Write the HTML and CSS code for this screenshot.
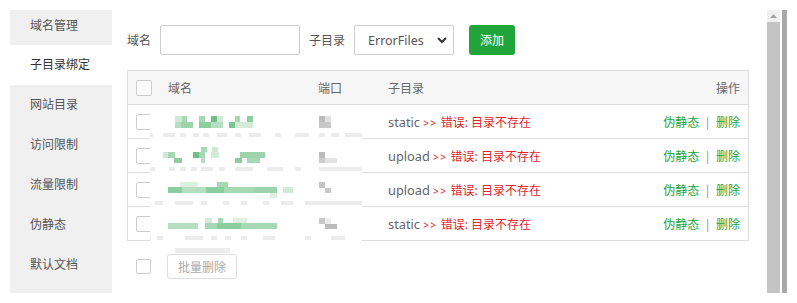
FILE: index.html
```html
<!DOCTYPE html>
<html lang="zh-CN">
  <head>
    <meta charset="UTF-8" />
    <meta name="viewport" content="width=device-width, initial-scale=1.0" />
    <title>子目录绑定</title>
    <link rel="stylesheet" href="styles.css">
  </head>
  <body>
    <div class="wrap">
      <ul class="side">
        <li class="first">域名管理</li>
        <li class="on">子目录绑定</li>
        <li>网站目录</li>
        <li>访问限制</li>
        <li>流量限制</li>
        <li>伪静态</li>
        <li>默认文档</li>
      </ul>

      <div class="main">
        <div class="form">
          <span class="lbl">域名</span>
          <input class="ipt" type="text" />
          <span class="lbl">子目录</span>
          <div class="sel">
            <span>ErrorFiles</span>
            <svg width="10" height="7" viewBox="0 0 10 7"><polyline points="1,1 5,5 9,1" fill="none" stroke="#333" stroke-width="2"/></svg>
          </div>
          <button class="btn">添加</button>
        </div>

        <div class="tbox">
          <table class="tbl">
            <thead>
              <tr>
                <th class="c_chk"><span class="chk"></span></th>
                <th class="c_dom">域名</th>
                <th class="c_port">端口</th>
                <th>子目录</th>
                <th class="c_op">操作</th>
              </tr>
            </thead>
            <tbody>
              <tr>
                <td class="c_chk"><span class="chk"></span></td>
                <td></td>
                <td></td>
                <td><span class="dir">static</span> <span class="err"><span class="arr">&gt;&gt;</span> 错误: 目录不存在</span></td>
                <td class="c_op"><a>伪静态</a><span class="sep">|</span><a>删除</a></td>
              </tr>
              <tr>
                <td class="c_chk"><span class="chk"></span></td>
                <td></td>
                <td></td>
                <td><span class="dir">upload</span> <span class="err"><span class="arr">&gt;&gt;</span> 错误: 目录不存在</span></td>
                <td class="c_op"><a>伪静态</a><span class="sep">|</span><a>删除</a></td>
              </tr>
              <tr>
                <td class="c_chk"><span class="chk"></span></td>
                <td></td>
                <td></td>
                <td><span class="dir">upload</span> <span class="err"><span class="arr">&gt;&gt;</span> 错误: 目录不存在</span></td>
                <td class="c_op"><a>伪静态</a><span class="sep">|</span><a>删除</a></td>
              </tr>
              <tr>
                <td class="c_chk"><span class="chk"></span></td>
                <td></td>
                <td></td>
                <td><span class="dir">static</span> <span class="err"><span class="arr">&gt;&gt;</span> 错误: 目录不存在</span></td>
                <td class="c_op"><a>伪静态</a><span class="sep">|</span><a>删除</a></td>
              </tr>
            </tbody>
          </table>

          <!-- pixelated domain / port cells -->
          <svg class="mosaic" width="212" height="148" viewBox="5 0 212 148">
            <rect x="5" y="0" width="212" height="148" fill="#fff"/>
            <g fill="#ececec">
              <rect x="0" y="28" width="8" height="4"/><rect x="18" y="28" width="12" height="4"/><rect x="35" y="28" width="6" height="4"/><rect x="48" y="28" width="6" height="4"/><rect x="58" y="28" width="6" height="4"/><rect x="72" y="28" width="10" height="4"/><rect x="90" y="28" width="6" height="4"/><rect x="104" y="28" width="12" height="4"/><rect x="130" y="28" width="6" height="4"/><rect x="150" y="28" width="14" height="4"/><rect x="174" y="28" width="6" height="4"/><rect x="186" y="28" width="8" height="4"/><rect x="200" y="28" width="17" height="4"/>
              <rect x="0" y="62" width="10" height="4"/><rect x="24" y="62" width="6" height="4"/><rect x="35" y="62" width="6" height="4"/><rect x="46" y="62" width="6" height="4"/><rect x="56" y="62" width="12" height="4"/><rect x="74" y="62" width="6" height="4"/><rect x="90" y="62" width="18" height="4"/><rect x="122" y="62" width="16" height="4"/><rect x="150" y="62" width="6" height="4"/><rect x="174" y="62" width="43" height="4"/>
              <rect x="10" y="96" width="8" height="4"/><rect x="30" y="96" width="18" height="4"/><rect x="56" y="96" width="6" height="4"/><rect x="78" y="96" width="6" height="4"/><rect x="96" y="96" width="6" height="4"/><rect x="118" y="96" width="6" height="4"/><rect x="136" y="96" width="12" height="4"/><rect x="160" y="96" width="57" height="4"/>
              <rect x="0" y="131" width="6" height="4"/><rect x="12" y="131" width="6" height="4"/><rect x="40" y="131" width="18" height="4"/><rect x="66" y="131" width="6" height="4"/><rect x="80" y="131" width="6" height="4"/><rect x="96" y="131" width="6" height="4"/><rect x="118" y="131" width="12" height="4"/><rect x="160" y="131" width="6" height="4"/><rect x="186" y="131" width="14" height="4"/>
              <rect x="30" y="143" width="55" height="5"/>
            </g>
            <g>
              <rect x="30" y="11" width="7" height="6" fill="#cfe9d6"/><rect x="37" y="11" width="5" height="6" fill="#a9dab5"/><rect x="54" y="11" width="6" height="6" fill="#a6d9b3"/><rect x="66" y="11" width="6" height="6" fill="#6fbf86"/><rect x="72" y="11" width="6" height="6" fill="#cfe9d6"/><rect x="90" y="11" width="5" height="6" fill="#a6d9b3"/><rect x="102" y="11" width="6" height="6" fill="#8ccd9d"/>
              <rect x="30" y="17" width="6" height="6" fill="#b5dfc0"/><rect x="36" y="17" width="12" height="6" fill="#9ed4ab"/><rect x="54" y="17" width="12" height="6" fill="#8ccd9d"/><rect x="66" y="17" width="12" height="6" fill="#b5dfc0"/><rect x="84" y="17" width="6" height="6" fill="#7cc693"/><rect x="90" y="17" width="18" height="6" fill="#d3ecd9"/>

              <rect x="56" y="42" width="6" height="5" fill="#a6d9b3"/><rect x="67" y="42" width="6" height="5" fill="#cfe9d6"/>
              <rect x="18" y="47" width="5" height="6" fill="#cfe9d6"/><rect x="23" y="47" width="7" height="6" fill="#a6d9b3"/><rect x="48" y="47" width="6" height="6" fill="#6fbf86"/><rect x="54" y="47" width="6" height="6" fill="#a6d9b3"/><rect x="66" y="47" width="8" height="6" fill="#d3ecd9"/><rect x="95" y="47" width="25" height="6" fill="#9ed4ab"/>
              <rect x="29" y="53" width="8" height="5" fill="#8ccd9d"/><rect x="56" y="53" width="4" height="5" fill="#b5dfc0"/><rect x="90" y="53" width="7" height="5" fill="#8ccd9d"/><rect x="102" y="53" width="13" height="5" fill="#a6d9b3"/>

              <rect x="35" y="77" width="18" height="5" fill="#dcefe1"/><rect x="72" y="77" width="11" height="5" fill="#a6d9b3"/>
              <rect x="23" y="82" width="14" height="6" fill="#8ccd9d"/><rect x="37" y="82" width="24" height="6" fill="#b5dfc0"/><rect x="61" y="82" width="18" height="6" fill="#8ccd9d"/><rect x="79" y="82" width="30" height="6" fill="#a6d9b3"/><rect x="109" y="82" width="23" height="6" fill="#9ed4ab"/><rect x="138" y="82" width="10" height="6" fill="#cfe9d6"/>
              <rect x="125" y="88" width="7" height="5" fill="#dcefe1"/>

              <rect x="60" y="113" width="7" height="5" fill="#d3ecd9"/><rect x="73" y="113" width="5" height="5" fill="#a6d9b3"/><rect x="88" y="113" width="14" height="5" fill="#dcefe1"/>
              <rect x="23" y="118" width="30" height="6" fill="#b5dfc0"/><rect x="60" y="118" width="12" height="6" fill="#a6d9b3"/><rect x="72" y="118" width="24" height="6" fill="#8ccd9d"/><rect x="96" y="118" width="36" height="6" fill="#a6d9b3"/>
            </g>
            <g>
              <rect x="174" y="11" width="6" height="6" fill="#bdbdbd"/><rect x="180" y="11" width="6" height="6" fill="#e0e0e0"/><rect x="174" y="17" width="12" height="6" fill="#c8c8c8"/>
              <rect x="174" y="47" width="6" height="6" fill="#bbb"/><rect x="174" y="53" width="6" height="5" fill="#ccc"/><rect x="180" y="53" width="12" height="5" fill="#e4e4e4"/>
              <rect x="174" y="77" width="6" height="6" fill="#c4c4c4"/><rect x="180" y="83" width="6" height="5" fill="#c8c8c8"/>
              <rect x="174" y="113" width="6" height="6" fill="#c8c8c8"/><rect x="180" y="113" width="6" height="6" fill="#ececec"/><rect x="180" y="119" width="12" height="5" fill="#bbb"/>
            </g>
          </svg>
        </div>

        <div class="bulk">
          <span class="chk"></span>
          <button class="btn_dis">批量删除</button>
        </div>
      </div>

      <div class="sbar">
        <div class="track">
          <div class="arrow">
            <svg width="7" height="4" viewBox="0 0 7 4"><polygon points="0,4 3.5,0 7,4" fill="#a3a3a3"/></svg>
          </div>
        </div>
        <div class="strip"></div>
      </div>
    </div>
  </body>
</html>
```

FILE: styles.css
```css
body {
  margin: 0;
  background: #fff;
  font-family: "Noto Sans", "Noto Sans CJK SC", sans-serif;
  font-size: 12px;
  color: #555;
}

.wrap {
  display: flex;
  padding: 10px 10px 0 10px;
}

.side {
  list-style: none;
  margin: 0;
  padding: 0;
  width: 102px;
  height: 283px;
  background: #f0f0f0;
  overflow: hidden;
}

.side li {
  height: 40px;
  line-height: 40px;
  padding-left: 20px;
  color: #555;
}

.side li.first {
  height: 35px;
  line-height: 31px;
}

.side li.on {
  background: #fff;
  color: #333;
}

.main {
  flex: 1;
  padding: 15px 18px 0 15px;
}

.form {
  display: flex;
  align-items: center;
  height: 30px;
}

.lbl {
  margin-right: 9px;
  color: #555;
}

.ipt {
  width: 140px;
  height: 30px;
  box-sizing: border-box;
  border: 1px solid #ccc;
  border-radius: 2px;
  margin: 0 9px 0 0;
}

.sel {
  width: 100px;
  height: 30px;
  box-sizing: border-box;
  border: 1px solid #ccc;
  border-radius: 2px;
  padding: 0 6px 0 13px;
  margin-right: 15px;
  display: flex;
  align-items: center;
  justify-content: space-between;
  color: #555;
  font-size: 12.5px;
}

.btn {
  width: 46px;
  height: 30px;
  border: 0;
  border-radius: 3px;
  background: #20a53a;
  color: #fff;
  font-family: inherit;
  font-size: 12px;
  padding: 0;
}

.tbox {
  position: relative;
  margin-top: 15px;
}

.tbl {
  width: 100%;
  border-collapse: collapse;
  border: 1px solid #ddd;
}

.tbl th,
.tbl td {
  height: 33px;
  padding: 0 8px;
  text-align: left;
  font-weight: normal;
  border-bottom: 1px solid #ddd;
  color: #666;
  white-space: nowrap;
}

.tbl th {
  background: #f6f6f6;
}

.tbl .c_chk {
  width: 16px;
  padding: 0 8px 0 8px;
}

.tbl .c_dom {
  width: 134px;
}

.tbl .c_port {
  width: 54px;
}

.tbl .c_op {
  text-align: right;
  width: 120px;
}

.chk {
  display: block;
  width: 16px;
  height: 16px;
  box-sizing: border-box;
  border: 1px solid #ccc;
  border-radius: 2px;
  background: #fff;
}

.dir {
  font-size: 12.8px;
}

.err {
  color: #e0262d;
}

.arr {
  font-size: 10px;
  letter-spacing: 1.5px;
}

.c_op a {
  color: #20a53a;
}

.sep {
  color: #999;
  margin: 0 5px;
}

.mosaic {
  position: absolute;
  left: 23px;
  top: 35px;
}

.bulk {
  display: flex;
  align-items: center;
  margin-top: 13px;
  padding-left: 9px;
}

.bulk .chk {
  width: 15px;
  height: 15px;
  margin-right: 16px;
}

.btn_dis {
  height: 25px;
  padding: 0 10px;
  border: 1px solid #ddd;
  border-radius: 3px;
  background: #fff;
  color: #aaa;
  font-family: inherit;
  font-size: 12px;
}

.sbar {
  width: 20px;
  height: 283px;
  display: flex;
}

.track {
  width: 13px;
  background: #c4c4c4;
}

.arrow {
  height: 12px;
  background: #f1f1f1;
  display: flex;
  align-items: center;
  justify-content: center;
}

.strip {
  width: 5px;
  margin-left: 2px;
  background: #a8a8a8;
}
```
